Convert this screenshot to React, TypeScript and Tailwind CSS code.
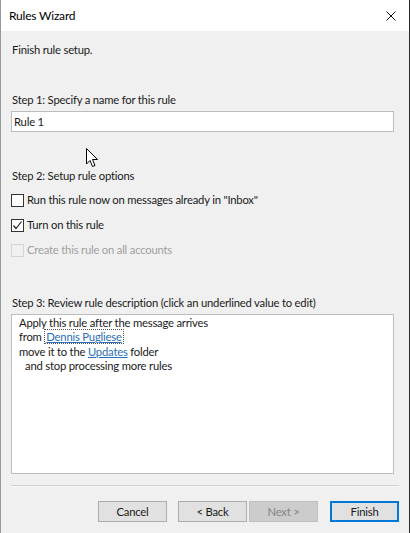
import React from "react";

const font = { fontFamily: 'Lato, "Noto Sans", sans-serif' };

function CheckRow({ label, checked, disabled }: { label: string; checked?: boolean; disabled?: boolean }) {
  return (
    <div className="flex items-center h-[16px] gap-[3px]">
      <div
        className={
          "w-[13px] h-[13px] border flex items-center justify-center " +
          (disabled ? "border-[#d4d4d4] bg-[#f0f0f0]" : "border-[#333333] bg-white")
        }
      >
        {checked && (
          <svg width="11" height="11" viewBox="0 0 11 11">
            <polyline points="1.5,5.5 4,8.5 9.5,1.5" fill="none" stroke="#222" strokeWidth="1.2" />
          </svg>
        )}
      </div>
      <span className={disabled ? "text-[#a0a0a0]" : "text-[#1a1a1a]"}>{label}</span>
    </div>
  );
}

function Btn({ children, disabled, primary }: { children: React.ReactNode; disabled?: boolean; primary?: boolean }) {
  let cls = "w-[69px] h-[21px] flex items-center justify-center ";
  if (disabled) cls += "bg-[#cccccc] border border-[#bfbfbf] text-[#838383]";
  else if (primary) cls += "bg-[#e1e1e1] border-2 border-[#0078d7] text-[#1a1a1a]";
  else cls += "bg-[#e1e1e1] border border-[#adadad] text-[#1a1a1a]";
  return <div className={cls}>{children}</div>;
}

export default function App() {
  return (
    <div className="w-[410px] h-[533px] bg-[#2b2b2b] overflow-hidden" style={font}>
      <div className="relative w-[409px] h-[533px] flex flex-col text-[11.25px] tracking-[-0.2px] border-l border-[#9a9a9a]">
        {/* title bar */}
        <div className="h-[31px] bg-white flex items-center justify-between pl-[8px] pr-[13px] shrink-0">
          <span className="text-[12px] text-black">Rules Wizard</span>
          <svg width="10" height="10" viewBox="0 0 10 10">
            <path d="M0.5 0.5 L9.5 9.5 M9.5 0.5 L0.5 9.5" stroke="#111" strokeWidth="1" />
          </svg>
        </div>

        {/* body */}
        <div className="flex-1 bg-[#f0f0f0] flex flex-col pl-[10px] pr-[15px] leading-[16px] text-[#1a1a1a]">
          <div className="mt-[11px] pl-[1px]">Finish rule setup.</div>

          <div className="mt-[34px] pl-[1px]">Step 1: Specify a name for this rule</div>
          <div className="mt-[3px] h-[21px] w-[383px] bg-white border border-[#bdbdbd] flex items-center pl-[2px]">
            Rule 1
          </div>

          <div className="mt-[36px] pl-[1px]">Step 2: Setup rule options</div>
          <div className="mt-[8px] flex flex-col gap-[9px]">
            <CheckRow label={'Run this rule now on messages already in "Inbox"'} />
            <CheckRow label="Turn on this rule" checked />
            <CheckRow label="Create this rule on all accounts" disabled />
          </div>

          <div className="mt-[37px] pl-[1px]">Step 3: Review rule description (click an underlined value to edit)</div>
          <div className="mt-[3px] h-[160px] w-[383px] bg-white border border-[#bdbdbd] pl-[7px] pt-[1px] leading-[14.3px]">
            <div>Apply this rule after the message arrives</div>
            <div>
              from{" "}
              <span className="border border-dotted border-[#555] text-[#2a6ebb] underline px-[1px]">Dennis Pugliese</span>
            </div>
            <div>
              move it to the <span className="text-[#2a6ebb] underline">Updates</span> folder
            </div>
            <div className="pl-[6px]">and stop processing more rules</div>
          </div>

          <div className="mt-[11px] w-[388px] h-[2px] border-t border-[#d0d0d0] border-b border-b-[#f8f8f8]" />

          <div className="mt-[14px] flex items-center justify-end w-[388px]">
            <Btn>Cancel</Btn>
            <div className="w-[11px]" />
            <Btn>&lt; Back</Btn>
            <div className="w-[2px]" />
            <Btn disabled>Next &gt;</Btn>
            <div className="w-[12px]" />
            <Btn primary>Finish</Btn>
          </div>
        </div>

        {/* mouse pointer */}
        <svg className="absolute left-[85px] top-[148px]" width="13" height="20" viewBox="0 0 13 20">
          <path
            d="M0.5 0.5 L0.5 16 L4 12.5 L6.5 18.5 L9 17.5 L6.5 11.5 L11.5 11.5 Z"
            fill="white"
            stroke="black"
            strokeWidth="1"
            strokeLinejoin="miter"
          />
        </svg>
      </div>
    </div>
  );
}
